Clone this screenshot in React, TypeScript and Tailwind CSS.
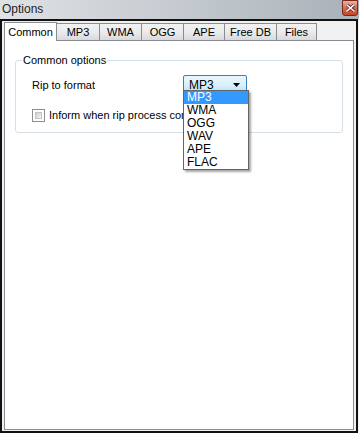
import React from "react";

const tabs = [
  { name: "Common", w: "w-[53px]" },
  { name: "MP3", w: "w-[43px]" },
  { name: "WMA", w: "w-[42px]" },
  { name: "OGG", w: "w-[42px]" },
  { name: "APE", w: "w-[41px]" },
  { name: "Free DB", w: "w-[52px]" },
  { name: "Files", w: "w-[40px]" },
];

const formats = ["MP3", "WMA", "OGG", "WAV", "APE", "FLAC"];

function CloseButton() {
  return (
    <div className="w-[16px] h-[16px] rounded-b-[3px] border border-[#7a2a1c] bg-gradient-to-b from-[#eeb0a0] via-[#dc6a50] to-[#c84224] flex items-center justify-center">
      <svg width="9" height="8" viewBox="0 0 9 8">
        <path d="M1 1 L8 7 M8 1 L1 7" stroke="#4a1a10" strokeWidth="3" strokeLinecap="square" />
        <path d="M1 1 L8 7 M8 1 L1 7" stroke="#ffffff" strokeWidth="1.6" strokeLinecap="square" />
      </svg>
    </div>
  );
}

export default function App() {
  return (
    <div
      className="w-[359px] h-[433px] bg-[#f0f0f0] flex flex-col overflow-hidden"
      style={{ fontFamily: '"Liberation Sans", Arial, sans-serif' }}
    >
      {/* title bar */}
      <div className="h-[19px] flex items-start bg-gradient-to-r from-[#dfe2e5] via-[#c4cacf] to-[#a9b1b8]">
        <span className="pl-[2px] pt-[2px] text-[12px] leading-[14px] text-[#1e1e1e]">Options</span>
        <div className="ml-auto mr-[1px]">
          <CloseButton />
        </div>
      </div>

      {/* client area */}
      <div className="w-[358px] flex-1 border-2 border-[#111] bg-[#f0f0f0] px-[2px] pb-[1px] flex flex-col">
        {/* tab strip */}
        <div className="h-[19px] flex items-end text-[11px] text-black">
          {tabs.map((t, i) =>
            i === 0 ? (
              <div
                key={t.name}
                className={`${t.w} h-[19px] -mb-px relative z-10 bg-white border border-b-0 border-[#898c95] flex items-center justify-center`}
              >
                {t.name}
              </div>
            ) : (
              <div
                key={t.name}
                className={`${t.w} h-[17px] bg-gradient-to-b from-[#f2f2f2] via-[#ebebeb] to-[#d9d9d9] border border-b-0 border-l-0 border-[#898c95] flex items-center justify-center`}
              >
                {t.name}
              </div>
            )
          )}
        </div>

        {/* panel */}
        <div className="flex-1 bg-white border border-[#898c95] relative">
          <div className="relative mt-[19px] ml-[10px] mr-[10px] h-[73px] border border-[#d5dfe5] rounded-[3px]">
            <span className="absolute -top-[8px] left-[6px] bg-white px-[1px] text-[11px] leading-[14px] text-black">
              Common options
            </span>
            <div className="pt-[14px] pl-[16px] flex flex-col gap-[14px] text-[11px] text-black">
              <div className="flex items-center h-[20px]">
                <span className="w-[151px]">Rip to format</span>
                <div className="w-[64px] h-[21px] rounded-[2px] border border-[#3c7fb1] bg-gradient-to-b from-[#eaf6fd] via-[#d9f0fc] to-[#a7d9f5] flex items-center pl-[5px] pr-[5px] text-[12px]">
                  <span>MP3</span>
                  <svg className="ml-auto" width="8" height="5" viewBox="0 0 8 5">
                    <path d="M0 0 H7 L3.5 4 Z" fill="#000" />
                  </svg>
                </div>
              </div>
              <div className="flex items-center gap-[4px] h-[13px]">
                <div className="w-[13px] h-[13px] border border-[#8f8f8f] bg-white p-[2px]">
                  <div className="w-full h-full bg-gradient-to-br from-[#cbcfd5] to-[#f6f6f6] border border-[#c0c4ca]" />
                </div>
                <span className="w-[134px] overflow-hidden whitespace-nowrap">
                  Inform when rip process completes
                </span>
              </div>
            </div>
          </div>

          {/* open dropdown list */}
          <div className="absolute left-[178px] top-[49px] w-[66px] border border-[#646464] bg-white text-[12px] leading-[13px] shadow-[2px_2px_2px_rgba(0,0,0,0.35)] z-20">
            {formats.map((f, i) => (
              <div
                key={f}
                className={`h-[13px] pl-[3px] ${i === 0 ? "bg-[#3399ff] text-white" : "text-black"}`}
              >
                {f}
              </div>
            ))}
          </div>
        </div>
      </div>
    </div>
  );
}
